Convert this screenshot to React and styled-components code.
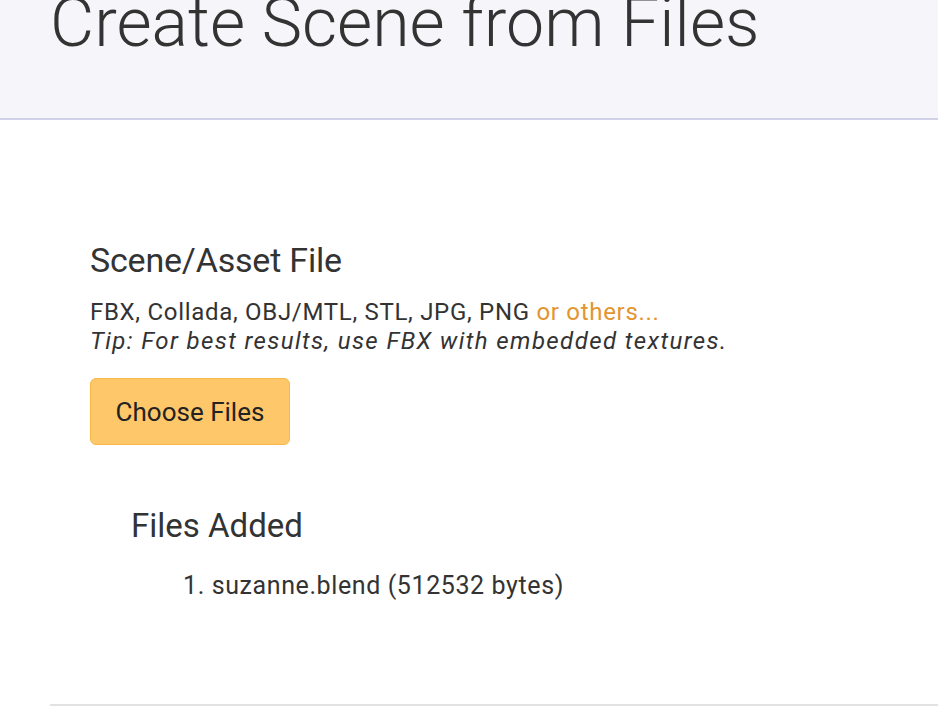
import React from 'react'
import styled, { createGlobalStyle } from 'styled-components'

const files = [{ name: 'suzanne.blend', size: 512532 }]

export default function App() {
  return (
    <>
      <GlobalStyle />
      <Header>
        <Title>Create Scene from Files</Title>
      </Header>
      <Main>
        <Content>
          <SectionTitle>Scene/Asset File</SectionTitle>
          <Formats>
            FBX, Collada, OBJ/MTL, STL, JPG, PNG <Link href="#">or others...</Link>
          </Formats>
          <Tip>Tip: For best results, use FBX with embedded textures.</Tip>
          <ChooseButton type="button">Choose Files</ChooseButton>
          <FilesAdded>
            <FilesTitle>Files Added</FilesTitle>
            <FileList>
              {files.map((f) => (
                <FileItem key={f.name}>
                  {f.name} ({f.size} bytes)
                </FileItem>
              ))}
            </FileList>
          </FilesAdded>
        </Content>
        <Divider />
      </Main>
    </>
  )
}

const GlobalStyle = createGlobalStyle`
  body {
    margin: 0;
    background: #ffffff;
    color: #333333;
    font-family: Roboto, "Noto Sans", sans-serif;
    overflow: hidden;
  }
`

const Header = styled.header`
  display: flex;
  align-items: flex-end;
  overflow: hidden;
  height: 57px;
  padding: 0 0 61px 50px;
  background: #f6f6fa;
  border-bottom: 2px solid #d0d1e6;
`

const Title = styled.h1`
  margin: 0;
  font-size: 68px;
  line-height: 68px;
  font-weight: 300;
  color: #333333;
  white-space: nowrap;
`

const Main = styled.main`
  padding-left: 50px;
`

const Content = styled.section`
  padding: 120px 0 104px 40px;
`

const SectionTitle = styled.h2`
  margin: 0 0 18px;
  font-size: 34px;
  line-height: 40px;
  font-weight: 400;
  letter-spacing: -0.2px;
`

const Formats = styled.p`
  margin: 0;
  font-size: 24px;
  line-height: 29px;
  letter-spacing: 0.7px;
`

const Link = styled.a`
  color: #e3952f;
  text-decoration: none;
`

const Tip = styled(Formats)`
  font-style: italic;
  letter-spacing: 1.4px;
`

const ChooseButton = styled.button`
  display: block;
  margin-top: 22px;
  width: 200px;
  height: 67px;
  box-sizing: border-box;
  background: #fec76a;
  border: 1px solid #f9b84a;
  border-radius: 6px;
  color: #222222;
  font-family: inherit;
  font-size: 26px;
  cursor: pointer;
`

const FilesAdded = styled.div`
  margin-top: 62px;
  padding-left: 41px;
`

const FilesTitle = styled.h3`
  margin: 0 0 26px;
  font-size: 33px;
  line-height: 38px;
  font-weight: 400;
`

const FileList = styled.ol`
  margin: 0;
  padding-left: 52px;
  list-style-position: inside;
`

const FileItem = styled.li`
  font-size: 25px;
  line-height: 29px;
  letter-spacing: 0.6px;
`

const Divider = styled.hr`
  margin: 0;
  border: 0;
  border-top: 2px solid #e2e2e2;
`
